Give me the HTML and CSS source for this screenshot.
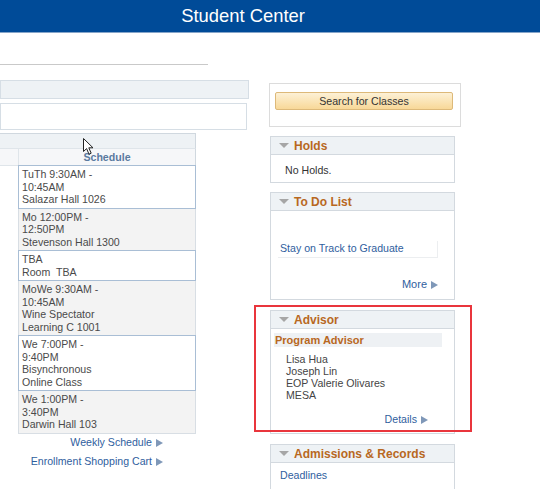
FILE: index.html
```html
<!DOCTYPE html>
<html>
<head>
<meta charset="utf-8">
<link rel="stylesheet" href="styles.css">
</head>
<body>
<div class="topbar"><span class="title">Student Center</span></div>
<div class="main">
  <div class="left">
    <div class="rule"></div>
    <div class="bar1"></div>
    <div class="box2"></div>
    <div class="table">
      <div class="th1"></div>
      <div class="th2"><div class="c0"></div><div class="c1">Schedule</div></div>
      <div class="row odd"><div class="c0"></div><div class="cell">TuTh 9:30AM -<br>10:45AM<br>Salazar Hall 1026</div></div>
      <div class="row even"><div class="c0"></div><div class="cell">Mo 12:00PM -<br>12:50PM<br>Stevenson Hall 1300</div></div>
      <div class="row odd"><div class="c0"></div><div class="cell">TBA<br>Room&nbsp; TBA</div></div>
      <div class="row even"><div class="c0"></div><div class="cell">MoWe 9:30AM -<br>10:45AM<br>Wine Spectator<br>Learning C 1001</div></div>
      <div class="row odd"><div class="c0"></div><div class="cell">We 7:00PM -<br>9:40PM<br>Bisynchronous<br>Online Class</div></div>
      <div class="row even"><div class="c0"></div><div class="cell">We 1:00PM -<br>3:40PM<br>Darwin Hall 103</div></div>
    </div>
    <div class="sched-links">
      <div><a class="lnk">Weekly Schedule</a><span class="arr"></span></div>
      <div><a class="lnk">Enrollment Shopping Cart</a><span class="arr"></span></div>
    </div>
  </div>
  <div class="right">
    <div class="searchbox"><div class="btn">Search for Classes</div></div>
    <div class="panel holds">
      <div class="phead"><span class="tri"></span><span class="ptitle">Holds</span></div>
      <div class="pbody-holds">No Holds.</div>
    </div>
    <div class="panel todo">
      <div class="phead"><span class="tri"></span><span class="ptitle">To Do List</span></div>
      <div class="pbody-todo">
        <div class="todo-item"><a class="lnk">Stay on Track to Graduate</a></div>
        <div class="more"><a class="lnk">More</a><span class="arr"></span></div>
      </div>
    </div>
    <div class="panel advisor">
      <div class="redbox"></div>
      <div class="phead"><span class="tri"></span><span class="ptitle">Advisor</span></div>
      <div class="pbody-adv">
        <div class="subhead">Program Advisor</div>
        <div class="names">Lisa Hua<br>Joseph Lin<br>EOP Valerie Olivares<br>MESA</div>
        <div class="details"><a class="lnk">Details</a><span class="arr"></span></div>
      </div>
    </div>
    <div class="panel adm">
      <div class="phead"><span class="tri"></span><span class="ptitle">Admissions &amp; Records</span></div>
      <div class="pbody-adm"><a class="lnk">Deadlines</a></div>
    </div>
  </div>
</div>
<svg class="cursor" width="11" height="18" viewBox="0 0 11 18"><path d="M0.5 0.5 L0.5 13.5 L3.6 10.6 L6 16.2 L8.2 15.2 L5.8 9.8 L10 9.8 Z" fill="#fff" stroke="#222" stroke-width="1" stroke-linejoin="round"/></svg>
</body>
</html>
```
FILE: styles.css
```css
* { box-sizing: border-box; }
body {
  margin: 0;
  font-family: "Liberation Sans", Arial, sans-serif;
  font-size: 10.6px;
  color: #333;
  background: #fff;
  position: relative;
}
.topbar {
  height: 33px;
  background: #004b98;
  border-bottom: 1px solid #86a5c9;
  display: flex;
  align-items: center;
  justify-content: center;
  padding-right: 54px;
  color: #fff;
  font-size: 18.4px;
}
.main {
  display: grid;
  grid-template-columns: 250px 192px;
  column-gap: 19px;
  align-items: start;
}
.left { padding-top: 31px; }
.rule { width: 208px; height: 1px; background: #c9c9c9; }
.bar1 {
  margin-top: 15px;
  width: 249px;
  height: 19px;
  border: 1px solid #d6dee5;
  background: #eef2f5;
}
.box2 {
  margin-top: 4px;
  width: 247px;
  height: 27px;
  border: 1px solid #d6dee5;
  background: #fff;
}
.table {
  margin-top: 3px;
  width: 196px;
}
.th1 {
  height: 16px;
  background: #eef2f5;
  border-top: 1px solid #d0d8df;
  border-right: 1px solid #d0d8df;
  border-bottom: 1px solid #dfe5ea;
}
.th2 {
  display: grid;
  grid-template-columns: 18px 1fr;
  height: 17px;
  background: #f6f7f9;
  border-right: 1px solid #d0d8df;
  border-bottom: 1px solid #dfe5ea;
}
.th2 .c1 {
  border-left: 1px solid #dfe5ea;
  text-align: center;
  font-weight: bold;
  color: #5b7aa0;
  line-height: 17px;
}
.row {
  display: grid;
  grid-template-columns: 18px 1fr;
  margin-top: -1px;
}
.cell {
  padding: 2px 3px;
  line-height: 12.5px;
  color: #4a4a4a;
  border: 1px solid #d8dee4;
}
.row.odd { position: relative; z-index: 1; }
.row.odd .cell { background: #fff; border-color: #a9bed5; }
.row.even .cell { background: #f3f3f3; }
.sched-links {
  width: 163px;
  text-align: right;
  line-height: 19px;
  margin-top: -1px;
}
.lnk { color: #2f5e9e; text-decoration: none; }
.arr {
  display: inline-block;
  width: 0;
  height: 0;
  border-left: 7px solid #7f98b8;
  border-top: 4.5px solid transparent;
  border-bottom: 4.5px solid transparent;
  margin-left: 4px;
  vertical-align: -1px;
}
.right { padding-top: 50px; }
.searchbox {
  width: 192px;
  height: 44px;
  border: 1px solid #dcdcdc;
  padding: 8px 7px 0 5px;
}
.btn {
  height: 18px;
  border: 1px solid #ddb979;
  border-radius: 2px;
  background: linear-gradient(#fdf1d6, #f8d898);
  text-align: center;
  line-height: 16px;
  color: #333;
}
.panel {
  width: 185px;
  margin-left: 1px;
  border: 1px solid #d3d9df;
  position: relative;
  background: #fff;
}
.phead {
  height: 18px;
  background: #eef2f5;
  border-bottom: 1px solid #d3d9df;
  display: flex;
  align-items: center;
  padding-left: 8px;
  gap: 5px;
}
.tri {
  width: 0;
  height: 0;
  border-top: 5px solid #a6a6a6;
  border-left: 5px solid transparent;
  border-right: 5px solid transparent;
}
.ptitle {
  font-weight: bold;
  font-size: 12px;
  color: #b8681f;
}
.holds { margin-top: 9px; }
.pbody-holds {
  padding: 9px 14px 5px;
  line-height: 13px;
  color: #333;
}
.todo { margin-top: 9px; }
.pbody-todo { padding: 30px 16px 8px 7px; }
.todo-item {
  height: 17px;
  line-height: 15px;
  padding-left: 2px;
  border-right: 1px solid #eceef0;
  border-bottom: 1px solid #eceef0;
}
.more {
  margin-top: 20px;
  text-align: right;
  line-height: 13px;
  font-size: 11px;
}
.advisor { margin-top: 10px; }
.redbox {
  position: absolute;
  left: -17px;
  top: -6px;
  width: 218px;
  height: 127px;
  border: 2px solid #e9353c;
  z-index: 2;
}
.pbody-adv { padding: 4px 12px 7px 3px; }
.subhead {
  background: #eef1f4;
  font-weight: bold;
  font-size: 11px;
  color: #b8681f;
  line-height: 14px;
  padding-left: 1px;
}
.names {
  margin-top: 6px;
  padding-left: 12px;
  line-height: 12px;
  color: #444;
}
.details {
  margin-top: 12px;
  text-align: right;
  padding-right: 14px;
  line-height: 13px;
}
.adm { margin-top: 10px; border-bottom: none; }
.pbody-adm {
  padding: 6px 9px 7px;
  line-height: 13px;
}
.cursor {
  position: absolute;
  left: 83px;
  top: 138px;
}
```
